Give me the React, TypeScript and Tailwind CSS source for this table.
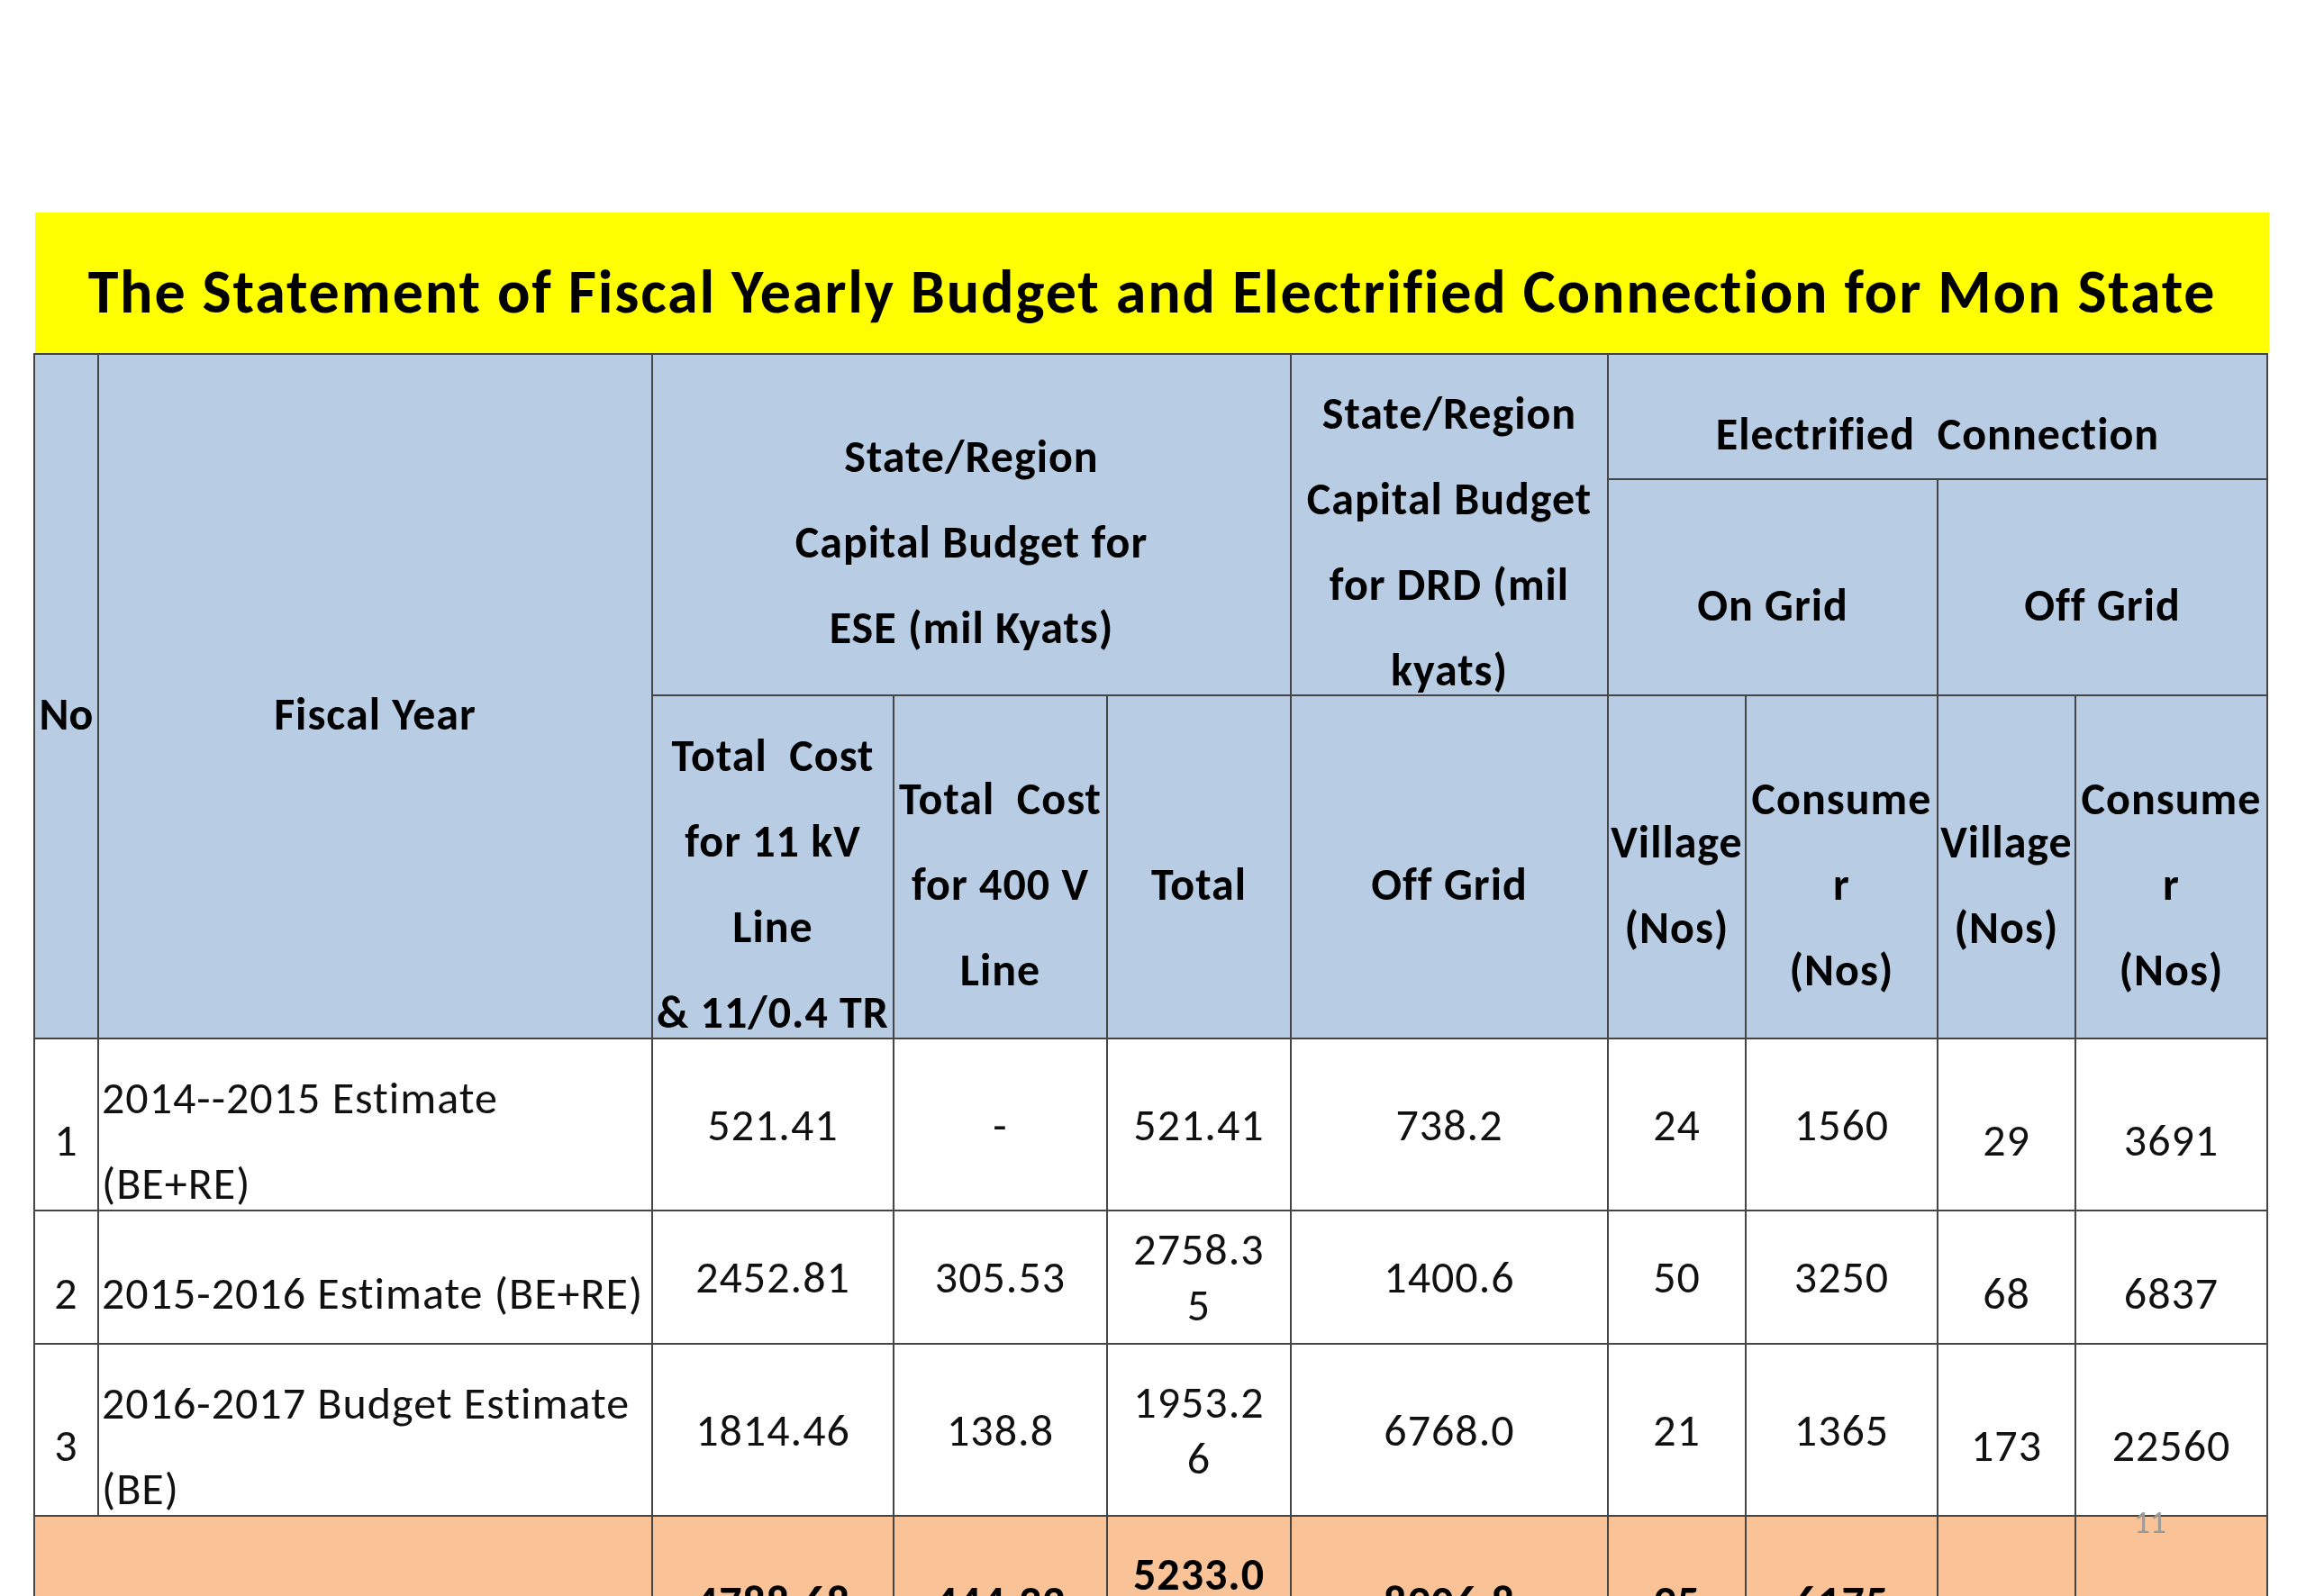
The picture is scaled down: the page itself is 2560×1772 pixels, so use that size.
import React from "react";

const HB = "bg-[#b8cce4] flex flex-col items-center justify-center text-center font-bold text-black text-[50px] tracking-[1px] leading-[95px] whitespace-pre overflow-visible";
const DW = "bg-white flex flex-col items-center justify-center text-center text-[#111] text-[50px] tracking-[1px] whitespace-pre overflow-visible";
const TO = "bg-[#f9c397] flex flex-col items-center justify-center text-center font-bold text-black text-[50px] tracking-[1px] whitespace-pre overflow-visible";

export default function App() {
  return (
    <div className="relative w-[2560px] h-[1772px] overflow-hidden bg-white [font-family:Carlito,Lato,sans-serif]">
      <div className="pt-[236px] pl-[37px] flex flex-col">
        <div className="ml-[2px] w-[2480px] h-[156px] bg-[#ffff00] flex items-center justify-center pt-[20px]">
          <span className="text-[68px] tracking-[1.8px] font-bold text-black whitespace-nowrap leading-none">
            The Statement of Fiscal Yearly Budget and Electrified Connection for Mon State
          </span>
        </div>
        <div className="grid w-[2481px] grid-cols-[69px_613px_266px_235px_202px_350px_151px_211px_151px_211px] grid-rows-[137px_238px_379px_189px_146px_189px_189px] gap-[2px] p-[2px] bg-[#454545]">
          {/* Header */}
          <div className={`${HB} col-start-1 row-start-1 row-span-3 pt-[38px] !tracking-normal`}>No</div>
          <div className={`${HB} col-start-2 row-start-1 row-span-3 pt-[38px]`}>Fiscal Year</div>
          <div className={`${HB} col-start-3 col-span-3 row-start-1 row-span-2 pt-[37px]`}>
            <span>State/Region</span>
            <span>Capital Budget for</span>
            <span>ESE (mil Kyats)</span>
          </div>
          <div className={`${HB} col-start-6 row-start-1 row-span-2 pt-[37px]`}>
            <span>State/Region</span>
            <span>Capital Budget</span>
            <span>for DRD (mil</span>
            <span>kyats)</span>
          </div>
          <div className={`${HB} col-start-7 col-span-4 row-start-1 pt-[38px]`}>Electrified  Connection</div>
          <div className={`${HB} col-start-7 col-span-2 row-start-2 pt-[38px]`}>On Grid</div>
          <div className={`${HB} col-start-9 col-span-2 row-start-2 pt-[38px]`}>Off Grid</div>

          <div className={`${HB} col-start-3 row-start-3 pt-[36px]`}>
            <span>Total  Cost</span>
            <span>for 11 kV</span>
            <span>Line</span>
            <span>&amp; 11/0.4 TR</span>
          </div>
          <div className={`${HB} col-start-4 row-start-3 pt-[38px]`}>
            <span>Total  Cost</span>
            <span>for 400 V</span>
            <span>Line</span>
          </div>
          <div className={`${HB} col-start-5 row-start-3 pt-[38px]`}>Total</div>
          <div className={`${HB} col-start-6 row-start-3 pt-[38px]`}>Off Grid</div>
          <div className={`${HB} col-start-7 row-start-3 pt-[38px]`}>
            <span>Village</span>
            <span>(Nos)</span>
          </div>
          <div className={`${HB} col-start-8 row-start-3 pt-[38px]`}>
            <span>Consume</span>
            <span>r</span>
            <span>(Nos)</span>
          </div>
          <div className={`${HB} col-start-9 row-start-3 pt-[38px]`}>
            <span>Village</span>
            <span>(Nos)</span>
          </div>
          <div className={`${HB} col-start-10 row-start-3 pt-[38px]`}>
            <span>Consume</span>
            <span>r</span>
            <span>(Nos)</span>
          </div>

          {/* Row 1 */}
          <div className={`${DW} col-start-1 row-start-4 leading-[95px] pt-[34px]`}>1</div>
          <div className={`${DW} col-start-2 row-start-4 leading-[95px] pt-[34px] !items-start text-left pl-[3px]`}>
            <span>2014--2015 Estimate</span>
            <span>(BE+RE)</span>
          </div>
          <div className={`${DW} col-start-3 row-start-4 leading-[62px]`}>521.41</div>
          <div className={`${DW} col-start-4 row-start-4 leading-[62px]`}>-</div>
          <div className={`${DW} col-start-5 row-start-4 leading-[62px]`}>521.41</div>
          <div className={`${DW} col-start-6 row-start-4 leading-[62px]`}>738.2</div>
          <div className={`${DW} col-start-7 row-start-4 leading-[62px]`}>24</div>
          <div className={`${DW} col-start-8 row-start-4 leading-[62px]`}>1560</div>
          <div className={`${DW} col-start-9 row-start-4 leading-[95px] pt-[34px]`}>29</div>
          <div className={`${DW} col-start-10 row-start-4 leading-[95px] pt-[34px]`}>3691</div>

          {/* Row 2 */}
          <div className={`${DW} col-start-1 row-start-5 leading-[95px] pt-[34px]`}>2</div>
          <div className={`${DW} col-start-2 row-start-5 leading-[95px] pt-[34px] !items-start text-left pl-[3px]`}>
            <span>2015-2016 Estimate (BE+RE)</span>
          </div>
          <div className={`${DW} col-start-3 row-start-5 leading-[62px]`}>2452.81</div>
          <div className={`${DW} col-start-4 row-start-5 leading-[62px]`}>305.53</div>
          <div className={`${DW} col-start-5 row-start-5 leading-[62px]`}>
            <span>2758.3</span>
            <span>5</span>
          </div>
          <div className={`${DW} col-start-6 row-start-5 leading-[62px]`}>1400.6</div>
          <div className={`${DW} col-start-7 row-start-5 leading-[62px]`}>50</div>
          <div className={`${DW} col-start-8 row-start-5 leading-[62px]`}>3250</div>
          <div className={`${DW} col-start-9 row-start-5 leading-[95px] pt-[34px]`}>68</div>
          <div className={`${DW} col-start-10 row-start-5 leading-[95px] pt-[34px]`}>6837</div>

          {/* Row 3 */}
          <div className={`${DW} col-start-1 row-start-6 leading-[95px] pt-[34px]`}>3</div>
          <div className={`${DW} col-start-2 row-start-6 leading-[95px] pt-[34px] !items-start text-left pl-[3px]`}>
            <span>2016-2017 Budget Estimate</span>
            <span>(BE)</span>
          </div>
          <div className={`${DW} col-start-3 row-start-6 leading-[62px]`}>1814.46</div>
          <div className={`${DW} col-start-4 row-start-6 leading-[62px]`}>138.8</div>
          <div className={`${DW} col-start-5 row-start-6 leading-[62px]`}>
            <span>1953.2</span>
            <span>6</span>
          </div>
          <div className={`${DW} col-start-6 row-start-6 leading-[62px]`}>6768.0</div>
          <div className={`${DW} col-start-7 row-start-6 leading-[62px]`}>21</div>
          <div className={`${DW} col-start-8 row-start-6 leading-[62px]`}>1365</div>
          <div className={`${DW} col-start-9 row-start-6 leading-[95px] pt-[34px]`}>173</div>
          <div className={`${DW} col-start-10 row-start-6 leading-[95px] pt-[34px]`}>22560</div>

          {/* Total row */}
          <div className={`${TO} col-start-1 col-span-2 row-start-7 leading-[95px] pt-[34px]`}>Total</div>
          <div className={`${TO} col-start-3 row-start-7 leading-[62px]`}>4788.68</div>
          <div className={`${TO} col-start-4 row-start-7 leading-[62px]`}>444.32</div>
          <div className={`${TO} col-start-5 row-start-7 leading-[62px]`}>
            <span>5233.0</span>
            <span>0</span>
          </div>
          <div className={`${TO} col-start-6 row-start-7 leading-[62px]`}>8906.8</div>
          <div className={`${TO} col-start-7 row-start-7 leading-[62px]`}>95</div>
          <div className={`${TO} col-start-8 row-start-7 leading-[62px]`}>6175</div>
          <div className={`${TO} col-start-9 row-start-7 leading-[95px] pt-[34px]`}>270</div>
          <div className={`${TO} col-start-10 row-start-7 leading-[95px] pt-[34px]`}>33088</div>
        </div>
      </div>
      <div className="absolute left-[2369px] top-[1673px] text-[35px] leading-none text-[#9a9a9a]">11</div>
    </div>
  );
}
